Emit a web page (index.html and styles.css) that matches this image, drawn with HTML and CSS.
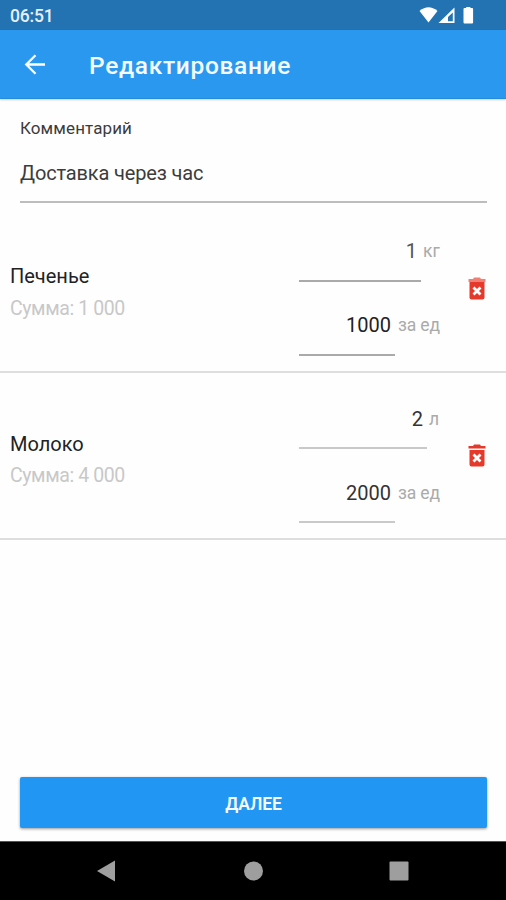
FILE: index.html
```html
<!DOCTYPE html>
<html lang="ru">
<head>
<meta charset="utf-8">
<title>Редактирование</title>
<link rel="stylesheet" href="styles.css">
</head>
<body>
<div class="screen">
  <div class="status">
    <span class="clock">06:51</span>
    <svg class="status-icons" width="56" height="20" viewBox="0 0 56 20" fill="#fff">
      <path d="M.5 5Q9.500-2.500 18.500 5L9.500 16.500Z"/>
      <path fill-rule="evenodd" d="M35.500 1.500V17H19.500ZM33.800 6.500L29 11V15.300H33.800Z"/>
      <path d="M45.500 2h1.700V1h4.200v1h1.700q1 0 1 1v13.500q0 1-1 1h-7.600q-1 0-1-1V3q0-1 1-1Z"/>
    </svg>
  </div>
  <header class="appbar">
    <svg class="back" width="24" height="24" viewBox="0 0 24 24" fill="none" stroke="#fff" stroke-width="2.300"><path d="M22 12.500H4M12.500 3.300L3.300 12.500l9.200 9.200"/></svg>
    <h1 class="title">Редактирование</h1>
  </header>
  <main class="content">
    <label class="comment">
      <span class="comment-label">Комментарий</span>
      <span class="comment-value">Доставка через час</span>
    </label>
    <section class="item">
      <div class="info"><div class="name">Печенье</div><div class="sum">Сумма: 1 000</div></div>
      <div class="fields">
        <div class="line"><span class="input soft">1</span><span class="unit kg">кг</span></div>
        <div class="line"><span class="input price">1000</span><span class="unit each">за ед</span></div>
      </div>
      <svg class="trash" width="18" height="24" viewBox="0 0 18 24"><path fill="#f08076" d="M.5 2H5L6 .5h6l1 1.500h4.500V5H.5Z"/><path fill="#e5392b" d="M1.500 5h15V20.500q0 2-2 2h-11q-2 0-2-2Z"/><path d="M5.500 10.500l7 7M12.500 10.500l-7 7" stroke="#fff" stroke-width="2.800"/></svg>
    </section>
    <section class="item light">
      <div class="info"><div class="name">Молоко</div><div class="sum">Сумма: 4 000</div></div>
      <div class="fields">
        <div class="line"><span class="input">2</span><span class="unit litre">л</span></div>
        <div class="line"><span class="input price">2000</span><span class="unit each">за ед</span></div>
      </div>
      <svg class="trash" width="18" height="24" viewBox="0 0 18 24"><path fill="#e5392b" d="M.5 2H5L6 .5h6l1 1.500h4.500V4.500H.5ZM1.500 6h15V20.500q0 2-2 2h-11q-2 0-2-2Z"/><path d="M5.500 10.500l7 7M12.500 10.500l-7 7" stroke="#fff" stroke-width="2.800"/></svg>
    </section>
  </main>
  <button class="next">ДАЛЕЕ</button>
  <nav class="navbar">
    <svg width="506" height="58" viewBox="0 0 506 58" fill="#9e9e9e"><path d="M97 29L115 18.500V39.500Z"/><circle cx="253.500" cy="29" r="9.500"/><rect x="389.500" y="19.500" width="19" height="19" rx="1"/></svg>
  </nav>
</div>
</body>
</html>
```
FILE: styles.css
```css
* { box-sizing: border-box; }
body { margin: 0; font-family: Roboto, "Liberation Sans", sans-serif; background: #fefefe; }
svg { display: block; flex: none; }
.screen { width: 506px; height: 900px; display: flex; flex-direction: column; overflow: hidden; }
.status { height: 30px; flex: none; background: #2372b2; display: flex; align-items: flex-start; justify-content: space-between; padding: 6px 31px 0 10px; }
.clock { color: #e4f0fa; font-size: 17.500px; line-height: 20px; font-weight: 500; letter-spacing: -.2px; }
.appbar { height: 69px; flex: none; background: #2b98f0; display: flex; align-items: center; padding-left: 23px; border-bottom: 1px solid #248bdd; box-shadow: 0 1px 2px rgba(0,0,0,.2); }
.title { margin: 3px 0 0 42px; font-size: 24.500px; line-height: 31px; font-weight: 500; letter-spacing: .68px; color: #f5faff; white-space: nowrap; }
.content { flex: 1; }
.comment { display: flex; flex-direction: column; height: 104px; margin: 0 19px 0 20px; padding-top: 18px; border-bottom: 2px solid #bdbdbd; color: #3c3c3c; }
.comment-label { font-size: 17px; line-height: 22px; letter-spacing: .1px; }
.comment-value { font-size: 20px; line-height: 24px; margin-top: 22px; letter-spacing: -.15px; }
.item { height: 167px; display: flex; border-bottom: 2px solid #dedede; padding-left: 10px; }
.comment + .item { margin-top: 3px; }
.info { width: 289px; padding-top: 58px; }
.name { font-size: 20px; line-height: 24px; color: #222; }
.sum { font-size: 19.500px; line-height: 24px; margin-top: 9px; color: #c8c8c8; letter-spacing: -.4px; }
.fields { width: 141px; padding-top: 30px; }
.line { display: flex; height: 46px; margin-bottom: 28px; }
.input { flex: 1; border-bottom: 2px solid #aaa; font-size: 20px; line-height: 30px; text-align: right; padding-right: 4px; color: #222; }
.input.soft { color: #555; }
.light .input { border-color: #c9c9c9; line-height: 32px; color: #333; }
.light .unit { line-height: 32px; }
.light .info { padding-top: 59px; }
.light .sum { margin-top: 8px; }
.input.price { flex: none; width: 96px; }
.unit { color: #aaa; font-size: 17.500px; line-height: 30px; white-space: nowrap; }
.kg { width: 19px; padding-left: 2px; }
.litre { width: 13px; padding-left: 2px; }
.each { margin-left: 3px; letter-spacing: -.15px; }
.trash { margin: 71px 0 0 28px; }
.next { flex: none; height: 51px; margin: 0 19px 13px 20px; padding: 2px 0 0; border: 0; border-radius: 2px; background: #2296f3; box-shadow: 0 1px 3px rgba(0,0,0,.4); color: #f5faff; font: 600 17.500px/20px Roboto, "Liberation Sans", sans-serif; letter-spacing: -.1px; }
.navbar { height: 59px; flex: none; background: #000; border-top: 1px solid #555; }
```
